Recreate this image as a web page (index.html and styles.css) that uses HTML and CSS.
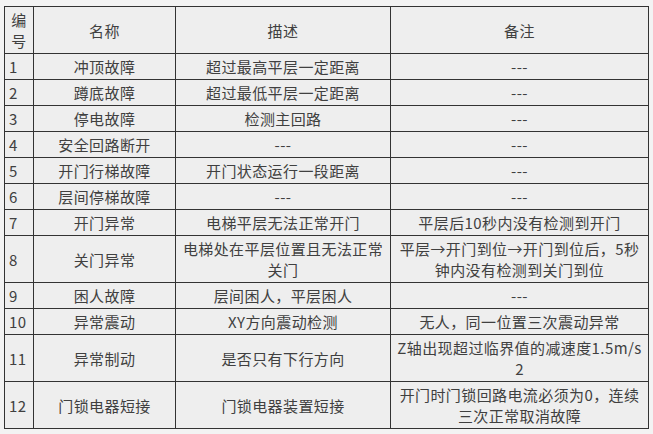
FILE: index.html
```html
<!DOCTYPE html>
<html lang="zh-CN">
<head>
<meta charset="utf-8">
<title>故障列表</title>
<link rel="stylesheet" href="styles.css">
</head>
<body>
<table class="fault-table">
  <colgroup>
    <col class="c-no">
    <col class="c-name">
    <col class="c-desc">
    <col class="c-note">
  </colgroup>
  <thead>
    <tr><th class="no">编号</th><th>名称</th><th>描述</th><th>备注</th></tr>
  </thead>
  <tbody>
    <tr><td class="no">1</td><td>冲顶故障</td><td>超过最高平层一定距离</td><td>---</td></tr>
    <tr><td class="no">2</td><td>蹲底故障</td><td>超过最低平层一定距离</td><td>---</td></tr>
    <tr><td class="no">3</td><td>停电故障</td><td>检测主回路</td><td>---</td></tr>
    <tr><td class="no">4</td><td>安全回路断开</td><td>---</td><td>---</td></tr>
    <tr><td class="no">5</td><td>开门行梯故障</td><td>开门状态运行一段距离</td><td>---</td></tr>
    <tr><td class="no">6</td><td>层间停梯故障</td><td>---</td><td>---</td></tr>
    <tr><td class="no">7</td><td>开门异常</td><td>电梯平层无法正常开门</td><td>平层后10秒内没有检测到开门</td></tr>
    <tr><td class="no">8</td><td>关门异常</td><td>电梯处在平层位置且无法正常关门</td><td>平层→开门到位→开门到位后，5秒钟内没有检测到关门到位</td></tr>
    <tr><td class="no">9</td><td>困人故障</td><td>层间困人，平层困人</td><td>---</td></tr>
    <tr><td class="no">10</td><td>异常震动</td><td>XY方向震动检测</td><td>无人，同一位置三次震动异常</td></tr>
    <tr><td class="no">11</td><td>异常制动</td><td>是否只有下行方向</td><td>Z轴出现超过临界值的减速度1.5m/s2</td></tr>
    <tr><td class="no">12</td><td>门锁电器短接</td><td>门锁电器装置短接</td><td>开门时门锁回路电流必须为0，连续三次正常取消故障</td></tr>
  </tbody>
</table>
</body>
</html>
```

FILE: styles.css
```css
html, body {
  margin: 0;
  padding: 0;
}
body {
  background: #f3f3f3;
  padding: 6px 0 0 4px;
  font-family: "Noto Sans CJK SC", "Noto Sans", sans-serif;
  color: #404040;
}
.fault-table {
  border-collapse: collapse;
  table-layout: fixed;
  width: 645px;
  background: #eeeeee;
  font-size: 15px;
  line-height: 21px;
  letter-spacing: 0.4px;
}
.c-no { width: 29px; }
.c-name { width: 142px; }
.c-desc { width: 215px; }
.c-note { width: 258px; }
.fault-table th,
.fault-table td {
  border: 1px solid #333333;
  padding: 2px 6px;
  text-align: center;
  vertical-align: middle;
  font-weight: normal;
  word-break: break-all;
}
.fault-table th.no {
  padding: 2px 4px;
}
.fault-table td.no {
  padding: 2px 4px;
  text-align: left;
  white-space: nowrap;
}
```
